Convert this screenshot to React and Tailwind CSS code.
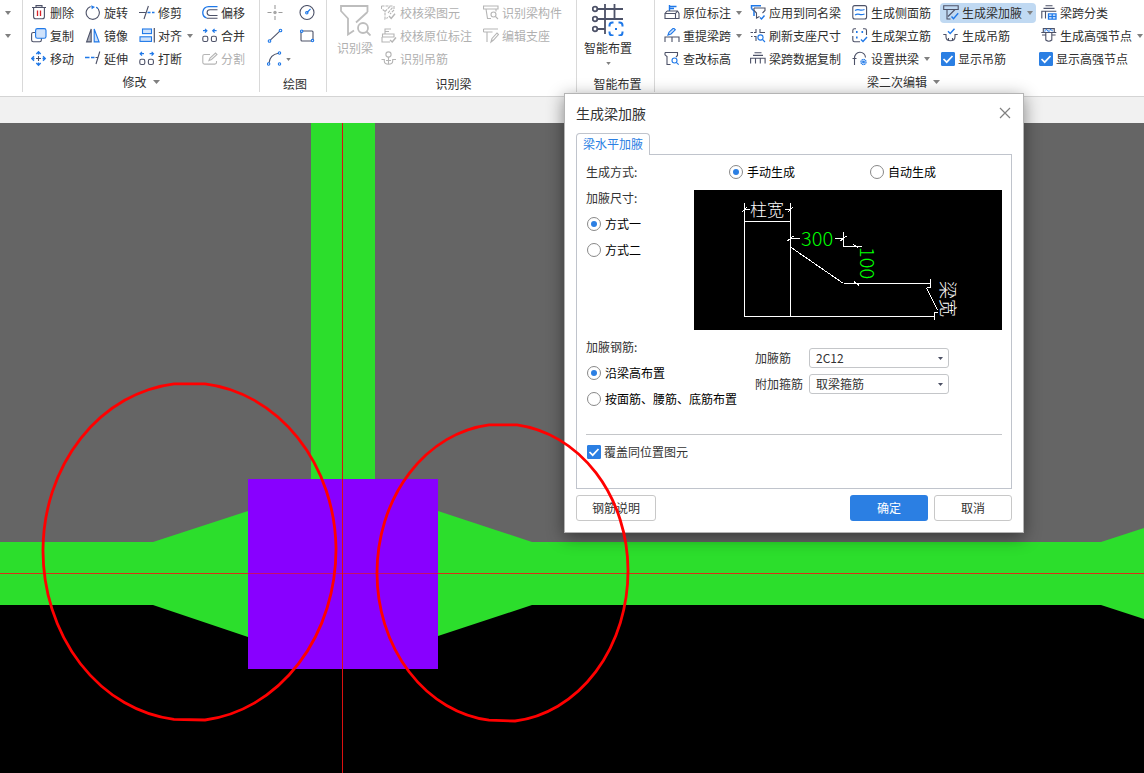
import React, { useState } from "react";

const INK = "#4d5268";
const BLUE = "#1f78e8";
const PALE = "#cfe2fb";
const OFF = "#b5b5b5";

function Icon({ children, stroke = INK }) {
  return (
    <svg viewBox="0 0 16 16" className="size-4 shrink-0" fill="none" stroke={stroke} strokeWidth="1.1" aria-hidden="true">
      {children}
    </svg>
  );
}

function Caret({ small }) {
  return (
    <svg viewBox="0 0 6 4" className={small ? "h-[3px] w-[5px] shrink-0" : "h-1 w-1.5 shrink-0"} fill="#808080" aria-hidden="true">
      <path d="M0 0h6L3 4z" />
    </svg>
  );
}

const icons = {
  trash: (
    <Icon>
      <path d="M1 2.5h14M5 2.2V.6h6v1.6M2.6 2.8v9q0 2 2 2h6.8q2 0 2-2v-9" />
      <path d="M6.5 5.5v5.5M9.5 5.5v5.5" stroke="#d8232a" strokeWidth="1.3" />
    </Icon>
  ),
  rotate: (
    <Icon>
      <path d="M5.6 1.5a6.6 6.6 0 1 0 5.6.6" />
      <path d="M6.2.2 10 2 6.7 4.3z" fill={BLUE} stroke="none" />
      <path d="M11.3 2.2a6.6 6.6 0 0 1 1.7 1.5" stroke={BLUE} />
    </Icon>
  ),
  trim: (
    <Icon>
      <path d="M0 7.5h6.5M9.4 1 5 14" />
      <path d="M8.5 7.5h3M13 7.5h2.5" stroke={BLUE} strokeWidth="1.3" />
    </Icon>
  ),
  offset: (
    <Icon>
      <path d="M15.5 1.6H6.6a5.9 5.9 0 0 0-2 11.4" stroke={BLUE} strokeWidth="1.3" />
      <path d="M15.5 4.7H8a2.9 2.9 0 0 0 0 5.8h7.5M4.6 13.2h10.9" />
    </Icon>
  ),
  copy: (
    <Icon>
      <path d="M4 4.5H2.3q-1.7 0-1.7 1.6v6q0 1.7 1.7 1.7h6.4q1.7 0 1.7-1.7V10" />
      <rect x="4.6" y=".6" width="10.4" height="9.6" rx="1.8" fill={PALE} stroke={BLUE} />
    </Icon>
  ),
  mirror: (
    <Icon>
      <path d="M6.2 1v12.9H1.6z" fill="#aeb2bd" />
      <path d="M9.2 1v12.9h4.9z" fill={PALE} stroke={BLUE} />
    </Icon>
  ),
  align: (
    <Icon>
      <rect x="3.5" y="1" width="9" height="4.6" fill={PALE} stroke={BLUE} />
      <rect x="1" y="8.8" width="11.5" height="4.6" fill={PALE} stroke={BLUE} />
      <path d="M15.3 0v14.5" strokeWidth="1.2" />
    </Icon>
  ),
  merge: (
    <Icon>
      <rect x=".8" y="8.3" width="5" height="5.2" rx="1.6" />
      <rect x="9.4" y="8.3" width="5" height="5.2" rx="1.6" />
      <path d="M1 2.700h3.500M3 .8 4.900 2.700 3 4.600M14.600 2.700h-3.500M12.600.8l-1.900 1.900 1.900 1.900" stroke={BLUE} strokeWidth="1.2" />
    </Icon>
  ),
  breakApart: (
    <Icon>
      <rect x=".8" y="8.3" width="5" height="5.2" rx="1.6" />
      <rect x="9.4" y="8.3" width="5" height="5.2" rx="1.6" />
      <path d="M5 2.700H1.500M3 .8 1.100 2.700 3 4.600M10.600 2.700h3.500M12.600.8l1.900 1.900-1.900 1.900" stroke={BLUE} strokeWidth="1.2" />
    </Icon>
  ),
  move: (
    <Icon stroke={BLUE}>
      <path d="M7.5 1v2.500M7.500 11.500V14M1 7.500h2.500M11.500 7.500H14M5.300 3 7.500.7 9.700 3M5.300 12l2.200 2.300L9.700 12M3 5.300.700 7.500 3 9.700M12 5.300l2.300 2.200L12 9.700" strokeWidth="1.3" />
      <path d="M7.500 5v5M5 7.500h5" stroke={INK} />
    </Icon>
  ),
  extend: (
    <Icon>
      <path d="M0 6.500h4.500M6 6.500h3.500" stroke={BLUE} strokeWidth="1.3" />
      <path d="M10.500 6.500h3M14.800.5 11 13" />
    </Icon>
  ),
  split: (
    <Icon stroke={OFF}>
      <path d="M8 3.500H2.500Q.8 3.500.8 5v6.500q0 1.600 1.700 1.600h10.300q1.700 0 1.700-1.600V10M7 9.500l1-2.500 5.500-5 1.500 1.500-5.500 5z" />
    </Icon>
  ),
  point: (
    <Icon stroke="#9c9c9c">
      <path d="M8 0v4M8 11v4M.5 7.500h4M11.500 7.500h4" />
      <circle cx="8" cy="7.500" r="1.700" fill="#a6a6a6" stroke="none" />
    </Icon>
  ),
  circle: (
    <Icon>
      <circle cx="8" cy="7.500" r="7" />
      <path d="m8 7.500 3.500-3.500" stroke={BLUE} />
      <circle cx="7.800" cy="7.800" r="1.200" stroke={BLUE} />
    </Icon>
  ),
  line: (
    <Icon>
      <path d="M3.300 12.200 12.800 3.200" />
      <circle cx="2.500" cy="13" r="1.300" stroke={BLUE} />
      <circle cx="13.500" cy="2.500" r="1.300" stroke={BLUE} />
    </Icon>
  ),
  rect: (
    <Icon>
      <rect x="2" y="3" width="12" height="10" rx="1" />
      <circle cx="2.700" cy="3.200" r="1.200" stroke={BLUE} fill="white" />
      <circle cx="13.500" cy="12.600" r="1.200" stroke={BLUE} fill="white" />
    </Icon>
  ),
  arc: (
    <Icon>
      <path d="M2 12c.6-5.500 4-9 9.500-9.800" />
      <circle cx="1.600" cy="13" r="1.200" stroke={BLUE} />
      <circle cx="12.500" cy="2" r="1.200" stroke={BLUE} />
      <circle cx="12.500" cy="13" r="1.200" stroke={BLUE} />
    </Icon>
  ),
  checkBeam: (
    <Icon stroke={OFF}>
      <path d="M.5 1h12M.5 1v2.500L4 6.500v7.500l3-1.500M4 6.500 9.500 1M7 8l5-6M13 1v4L9 9" strokeDasharray="3 1" />
      <path d="m8 11 2.200 2.500L14 8.800" strokeWidth="1.400" />
    </Icon>
  ),
  checkMark: (
    <Icon stroke={OFF}>
      <path d="M4 6V.5M4 1h6M4 3.500h4M1.500 6h11.500v3H1.500zM1 9v5h8M13 6v3" />
      <path d="m9 12 2.200 2L15 9.500" strokeWidth="1.400" />
    </Icon>
  ),
  hanger: (
    <Icon stroke={OFF}>
      <circle cx="7.500" cy="3.500" r="2.600" />
      <path d="M7.500 6v7M.5 8.500h2.800v1.500q0 3.200 4.200 3.200t4.200-3.200V8.500H15M5 9.500h5" />
    </Icon>
  ),
  idPart: (
    <Icon stroke={OFF}>
      <path d="M.5 1h14.500v3H.5zM3 4l1.500 9.500H8M13 4v2.500" />
      <circle cx="10.500" cy="9.500" r="2.500" />
      <path d="m12.500 11.500 2.500 2.500" />
    </Icon>
  ),
  editSeat: (
    <Icon stroke={OFF}>
      <path d="M.5 1h14.500M.5 4h9M4 4v10M.5 1v3M8 14l1-3.500L14 5l1.500 1.500-5 5.500z" />
    </Icon>
  ),
  stamp: (
    <Icon>
      <path d="M5.500 6V0M5.500 1.500h7M5.500 3.500h4.500" stroke={BLUE} strokeWidth="1.400" />
      <path d="M3 6h10.500l1.500 2.500v5h-3M1 8.500h10.500v5H1zL3 6M11.500 8.500 13.500 6" />
    </Icon>
  ),
  respan: (
    <Icon>
      <path d="m4 7 1-2.800L9.500 0l1.800 1.800L7 6z" stroke={BLUE} fill={PALE} />
      <path d="M1 14V9h14v5M8 9v5" />
    </Icon>
  ),
  level: (
    <Icon>
      <path d="M1 1.500h12.500v3L12 6M1 1.500v2.300L3 5.500v8h3.500" />
      <circle cx="10.500" cy="9.500" r="2.500" stroke={BLUE} />
      <path d="m12.300 11.400 2.400 2.300" stroke={BLUE} />
    </Icon>
  ),
  apply: (
    <Icon>
      <path d="M1.500 3.500V.8h9.500M1.500 3.500 4 6v5" stroke={BLUE} strokeWidth="1.500" />
      <path d="M4 3h11v2.500L12.500 8M4 3v2.500L6.500 8v5l3-1.500" />
      <path d="m10 12.500 1.500 1.500 3-3.500" stroke={BLUE} strokeWidth="1.400" />
    </Icon>
  ),
  refresh: (
    <Icon>
      <path d="M.5 4.500h2.500M6 1v3.500H4M10 1v3.500h5M4 8.500h2V13M1 8.500h1.500" />
      <circle cx="10.500" cy="9.500" r="2.600" stroke={BLUE} />
      <path d="m12.500 11.500 2.500 2.500" stroke={BLUE} />
    </Icon>
  ),
  spanCopy: (
    <Icon>
      <path d="M4.500 1.800h7M3 4.400h10M.6 12.500V7.200h14.500v5.300M5.500 7.200v5.300M10.300 7.200v5.300" />
    </Icon>
  ),
  sideBar: (
    <Icon>
      <rect x=".8" y=".6" width="13.800" height="13.400" rx="2" />
      <path d="M3 5.500q2-1.200 4.500-.6t5-.4M3 10q2-1.200 4.500-.6t5-.4" stroke={BLUE} strokeWidth="1.300" />
    </Icon>
  ),
  erectBar: (
    <Icon>
      <path d="M4 .8H2.500q-1.700 0-1.700 1.700V5M.8 8v4q0 1.700 1.700 1.700H8M11 .8h1.800q1.700 0 1.700 1.700V7" />
      <path d="M4 4h1.600M9.500 4h1.600M4 9.500h1.600" stroke={BLUE} strokeWidth="1.800" />
      <path d="m9 11.500 2 2 4-4.500" stroke={BLUE} strokeWidth="1.400" />
    </Icon>
  ),
  arch: (
    <Icon>
      <path d="M2.500 14V7a5.500 5.500 0 0 1 11-.5M.5 7.500h4" />
      <circle cx="11.500" cy="11" r="2.600" fill={PALE} stroke={BLUE} strokeDasharray="1.500 .5" />
      <circle cx="11.500" cy="11" r=".8" stroke={BLUE} />
    </Icon>
  ),
  haunch: (
    <Icon>
      <path d="M.7 4.500V.8h14.500v3.700zM4 4.500V14h3.500M5 11.500 12 4.500" />
      <path d="m8.500 11.500 2 2.200 4.700-5.500" stroke={BLUE} strokeWidth="1.400" />
    </Icon>
  ),
  makeHanger: (
    <Icon>
      <path d="M.3 6.500H3v2.200q0 4 4.500 4t4.500-4V6.500h2.700M5.500 10v2M9.500 10v2" />
      <path d="m5 3.200 2.200 2.300L11.500.8" stroke={BLUE} strokeWidth="1.400" />
    </Icon>
  ),
  classify: (
    <Icon>
      <path d="M4.500.8h7M2.500 3.400h11M.8 13.500V6.200h14.500M4.500 6.200v7.300" />
      <path d="M7.500 8.800h7.500v5.400H7.500zM11.200 8.800v5.400M7.500 11.500H15" stroke={BLUE} strokeWidth="1.300" />
    </Icon>
  ),
  node: (
    <Icon>
      <path d="M2.300 4V.6h11V4M.3 4.500h15M4.800 4.500V12q3 2.600 6 0V4.500M1 7h3.800M10.800 7h3.800" />
      <path d="M3.500 3.500 5.500 1.300l2.200 2.200 2.200-2.200 2.200 2.200" stroke={BLUE} strokeDasharray="1.400 .6" />
    </Icon>
  ),
};

function Tool({ icon, label, caret, disabled, active, iconOnly }) {
  return (
    <button
      type="button"
      disabled={disabled}
      aria-label={label}
      aria-pressed={active ? true : undefined}
      className={
        "flex h-5 w-max items-center gap-[3px] whitespace-nowrap rounded-sm text-xs leading-4 " +
        (disabled ? "text-[#b0b0b0] " : "text-[#2f2f2f] ") +
        (active ? "-mx-[3px] bg-[#c0d9f2] px-[3px]" : "")
      }
    >
      {icons[icon]}
      {!iconOnly && <span>{label}</span>}
      {caret && <span className={iconOnly ? "flex" : "ml-0.5 flex"}><Caret small={iconOnly} /></span>}
    </button>
  );
}

function Group({ title, caret, children, className = "" }) {
  return (
    <section className={"flex shrink-0 flex-col border-r border-[#d9d9d9] " + className}>
      <div className="flex-1">{children}</div>
      <h2 className={"flex h-5 items-center justify-center gap-1.5 text-xs leading-4 text-[#2f2f2f] " + (caret ? "" : "pt-[3px] pl-1")}>
        {title}
        {caret && <svg viewBox="0 0 7 4" className="h-1 w-[7px]" fill="#808080" aria-hidden="true"><path d="M0 0h7L3.500 4z" /></svg>}
      </h2>
    </section>
  );
}

function Check({ label, checked, onChange, dark }) {
  return (
    <label className={"flex h-5 w-max items-center gap-[3px] whitespace-nowrap text-xs leading-4 " + (dark ? "-ml-0.5 text-[#2f2f2f]" : "text-[#333]")}>
      <span className="grid size-3.5 place-items-center">
        <input
          type="checkbox"
          checked={checked}
          onChange={(e) => onChange(e.target.checked)}
          className="peer col-start-1 row-start-1 size-3.5 appearance-none rounded-[1px] border border-[#999] bg-white checked:border-[#2b7fe3] checked:bg-[#2b7fe3]"
        />
        <svg viewBox="0 0 14 14" className="pointer-events-none invisible col-start-1 row-start-1 size-3.5 peer-checked:visible" fill="none" stroke="white" strokeWidth="1.700" aria-hidden="true">
          <path d="m2.500 7 3.200 3.200L11.500 4" />
        </svg>
      </span>
      {label}
    </label>
  );
}

function Radio({ name, label, checked, onChange }) {
  return (
    <label className="flex h-[26px] w-max items-center gap-1 whitespace-nowrap text-xs leading-4 text-black">
      <span className="grid size-3.5 place-items-center">
        <input
          type="radio"
          name={name}
          checked={checked}
          onChange={onChange}
          className="peer col-start-1 row-start-1 size-3.5 appearance-none rounded-full border border-[#888] bg-white"
        />
        <span className="pointer-events-none invisible col-start-1 row-start-1 size-1.5 rounded-full bg-[#2b7fe3] peer-checked:visible" />
      </span>
      {label}
    </label>
  );
}

function Choice({ id, label, options }) {
  return (
    <>
      <label htmlFor={id} className="text-xs leading-4 text-[#333]">{label}</label>
      <span className="relative flex items-center">
        <select id={id} className="h-5 w-[140px] appearance-none rounded-[3px] border border-[#c4c6c9] bg-white px-1.5 text-xs leading-4 text-[#333]">
          {options.map((o) => <option key={o}>{o}</option>)}
        </select>
        <svg viewBox="0 0 5 3" className="pointer-events-none absolute right-1.5 h-[3px] w-[5px]" fill="#4a4f63" aria-hidden="true"><path d="M0 0h5L2.500 3z" /></svg>
      </span>
    </>
  );
}

function Ribbon() {
  const [hangers, setHangers] = useState(true);
  const [nodes, setNodes] = useState(true);
  return (
    <header className="flex h-[97px] overflow-hidden border-b border-[#d4d4d4] bg-white pb-1">
      <div className="flex w-[23px] shrink-0 flex-col border-r border-[#d9d9d9] pt-[3px] pl-[5px]">
        <button type="button" aria-label="更多选择" className="flex h-5 items-center"><Caret /></button>
        <button type="button" aria-label="更多工具" className="mt-[3px] flex h-5 items-center"><Caret /></button>
      </div>

      <Group title="修改" caret className="w-[237px]">
        <div className="grid grid-cols-[54px_54px_63px_auto] gap-y-[3px] pt-[3px] pl-2">
          <Tool icon="trash" label="删除" />
          <Tool icon="rotate" label="旋转" />
          <Tool icon="trim" label="修剪" />
          <Tool icon="offset" label="偏移" />
          <Tool icon="copy" label="复制" />
          <Tool icon="mirror" label="镜像" />
          <Tool icon="align" label="对齐" caret />
          <Tool icon="merge" label="合并" />
          <Tool icon="move" label="移动" />
          <Tool icon="extend" label="延伸" />
          <Tool icon="breakApart" label="打断" />
          <Tool icon="split" label="分割" disabled />
        </div>
      </Group>

      <Group title="绘图" className="w-[67px]">
        <div className="grid grid-cols-[32px_auto] gap-y-[3px] pt-[3px] pl-[7px]">
          <Tool icon="point" label="点" iconOnly disabled />
          <Tool icon="circle" label="圆" iconOnly />
          <Tool icon="line" label="直线" iconOnly />
          <Tool icon="rect" label="矩形" iconOnly />
          <Tool icon="arc" label="弧线" iconOnly caret />
        </div>
      </Group>

      <Group title="识别梁" className="w-[250px]">
        <div className="flex pl-2.5">
          <button type="button" disabled className="flex h-max w-9 flex-col items-center gap-1 pt-1 text-xs leading-4 text-[#b0b0b0]">
            <svg viewBox="0 0 32 32" className="size-8" fill="none" stroke="#bdbdbd" strokeWidth="1.800" aria-hidden="true">
              <path d="M28.500 8V2H2v5l7 7.500V30.500l6-4M28.500 8 17 18.500" />
              <circle cx="24" cy="24" r="5" />
              <path d="m27.500 27.500 4 4" />
            </svg>
            <span className="whitespace-nowrap">识别梁</span>
          </button>
          <div className="ml-2 grid grid-cols-[102px_auto] gap-y-[3px] pt-[3px]">
            <Tool icon="checkBeam" label="校核梁图元" disabled />
            <Tool icon="idPart" label="识别梁构件" disabled />
            <Tool icon="checkMark" label="校核原位标注" disabled />
            <Tool icon="editSeat" label="编辑支座" disabled />
            <Tool icon="hanger" label="识别吊筋" disabled />
          </div>
        </div>
      </Group>

      <Group title="智能布置" className="w-[78px]">
        <button type="button" className="ml-[7px] flex flex-col items-center pt-1 text-xs leading-4 text-[#2f2f2f]">
          <svg viewBox="0 0 32 32" className="size-8" fill="none" stroke={INK} strokeWidth="1.800" aria-hidden="true">
            <path d="M5 5h26M5 15h26M5 25h8M13 0v30M22.500 0v14" />
            <g fill="white"><circle cx="3" cy="5" r="2.300" /><circle cx="3" cy="15" r="2.300" /><circle cx="3" cy="25" r="2.300" /></g>
            <rect x="17.500" y="18.500" width="13" height="13" rx="3" stroke="white" strokeWidth="4" fill="white" />
            <path d="M17.500 22.500v-1q0-3 3-3h1M26.500 18.500h1q3 0 3 3v1M30.500 27.500v1q0 3-3 3h-1M21.500 31.500h-1q-3 0-3-3v-1" stroke={BLUE} strokeWidth="2" />
            <path d="M23 25h2" stroke={BLUE} strokeWidth="2" />
          </svg>
          <span className="mt-1 mb-1.5 whitespace-nowrap">智能布置</span>
          <Caret small />
        </button>
      </Group>

      <Group title="梁二次编辑" caret className="w-[498px]">
        <div className="grid grid-cols-[86px_102px_91px_98px_auto] gap-y-[3px] pt-[3px] pl-[9px]">
          <Tool icon="stamp" label="原位标注" caret />
          <Tool icon="apply" label="应用到同名梁" />
          <Tool icon="sideBar" label="生成侧面筋" />
          <Tool icon="haunch" label="生成梁加腋" caret active />
          <Tool icon="classify" label="梁跨分类" />
          <Tool icon="respan" label="重提梁跨" caret />
          <Tool icon="refresh" label="刷新支座尺寸" />
          <Tool icon="erectBar" label="生成架立筋" />
          <Tool icon="makeHanger" label="生成吊筋" />
          <Tool icon="node" label="生成高强节点" caret />
          <Tool icon="level" label="查改标高" />
          <Tool icon="spanCopy" label="梁跨数据复制" />
          <Tool icon="arch" label="设置拱梁" caret />
          <Check label="显示吊筋" checked={hangers} onChange={setHangers} dark />
          <Check label="显示高强节点" checked={nodes} onChange={setNodes} dark />
        </div>
      </Group>
    </header>
  );
}

function Scene() {
  return (
    <svg viewBox="0 0 1144 650" preserveAspectRatio="xMinYMin slice" className="absolute inset-0 size-full" role="img" aria-label="梁柱节点平面">
      <rect width="1144" height="450" fill="#656565" />
      <rect y="450" width="1144" height="200" fill="#000" />
      <g fill="#2cde2c">
        <rect x="311" width="64" height="357" />
        <path d="M0 419h153l95-31v126l-95-32H0z" />
        <path d="M438 388l94 31h569l43-14v91l-43-14H532l-94 31z" />
      </g>
      <rect x="248" y="356" width="190" height="190" fill="#8800ff" />
      <rect y="450" width="1144" height="1" fill="#d8301a" />
      <rect x="248" y="450" width="190" height="1" fill="#c4106a" />
      <rect x="342" width="1" height="650" fill="#dc1010" />
    </svg>
  );
}

function Markup() {
  return (
    <svg viewBox="0 0 1144 650" preserveAspectRatio="xMinYMin slice" className="pointer-events-none absolute inset-0 size-full" fill="none" stroke="#ff0000" strokeWidth="2.800" aria-hidden="true">
      <path d="M174 260.800h31A147 168 0 0 1 336 425A147 172 0 0 1 205 597l-31-.6A147 170 0 0 1 43 427A147 168 0 0 1 174 260.800z" />
      <path d="M489 301.800h28A126 147 0 0 1 628 447A126 151 0 0 1 515 598l-26-.8A126 148 0 0 1 377 450A126 149 0 0 1 489 301.800z" />
    </svg>
  );
}

function HaunchDiagram() {
  return (
    <svg viewBox="0 0 308 140" className="mt-[5px] h-[140px] w-[308px] bg-black" fill="none" stroke="white" role="img" aria-label="加腋尺寸示意图">
      <g shapeRendering="crispEdges">
        <path d="M50.500 13v113.500M96.500 13v113.500M50.500 31.500h46M50.500 126.500h190M149.500 93.500h87" />
        <path d="M50.500 19.500h5M91 19.500h5M96.500 48.500h9.500M141 48.500h8.500M149.500 42v14.500h18M236.500 89v8.500h-4M243.500 122.500h-3v7" />
        <path d="M96.500 57l53 36.500M232.500 98l11 22M48 22l5-5M94 22l5-5M93.500 51l6-5M146.500 51l6-5M159 54.500l5 3M160 91.500l5 4" />
      </g>
      <g stroke="none">
        <text x="56" y="26" fontSize="17" fill="white" className="font-light">柱宽</text>
        <text x="107" y="56" fontSize="20" fill="#00ff00" className="font-light">300</text>
        <text transform="translate(166 57) rotate(90)" fontSize="20" fill="#00ff00" className="font-light">100</text>
        <text transform="translate(247 91) rotate(90)" fontSize="18" fill="white" className="font-light">梁宽</text>
      </g>
    </svg>
  );
}

function HaunchDialog() {
  const [mode, setMode] = useState("manual");
  const [size, setSize] = useState("one");
  const [layout, setLayout] = useState("height");
  const [cover, setCover] = useState(true);
  return (
    <div role="dialog" aria-labelledby="dialog-title" className="absolute -top-[30px] left-[564px] w-[460px] border border-[#b4b4b4] bg-white px-[11px] pb-[11px] shadow-[0_4px_16px_rgba(0,0,0,0.45)]">
      <div className="flex h-[39px] items-center justify-between pr-px pb-0.5">
        <h1 id="dialog-title" className="text-sm leading-5 text-[#333]">生成梁加腋</h1>
        <button type="button" aria-label="关闭" className="flex size-3 items-center justify-center">
          <svg viewBox="0 0 12 12" className="size-3" fill="none" stroke="#808080" strokeWidth="1.200" aria-hidden="true"><path d="m1 1 10 10M11 1 1 11" /></svg>
        </button>
      </div>
      <div role="tablist" className="flex">
        <button type="button" role="tab" aria-selected="true" className="relative -mb-px h-[22px] rounded-t border border-b-0 border-[#c0c4cc] bg-white px-1.5 pb-0.5 text-xs leading-4 text-[#2b7fe3]">梁水平加腋</button>
      </div>
      <div role="tabpanel" className="border border-[#c0c4cc] pt-1 pr-[9px] pb-[26px] pl-[9px] text-xs leading-4 text-[#333]">
        <div role="radiogroup" aria-label="生成方式" className="grid h-[26px] grid-cols-[143px_141px_auto] items-center">
          <span>生成方式:</span>
          <Radio name="mode" label="手动生成" checked={mode === "manual"} onChange={() => setMode("manual")} />
          <Radio name="mode" label="自动生成" checked={mode === "auto"} onChange={() => setMode("auto")} />
        </div>
        <div className="flex justify-between">
          <div role="radiogroup" aria-label="加腋尺寸">
            <div className="flex h-[26px] items-center">加腋尺寸:</div>
            <div className="pl-px">
              <Radio name="size" label="方式一" checked={size === "one"} onChange={() => setSize("one")} />
              <Radio name="size" label="方式二" checked={size === "two"} onChange={() => setSize("two")} />
            </div>
          </div>
          <HaunchDiagram />
        </div>
        <div className="mt-1 flex">
          <div role="radiogroup" aria-label="加腋钢筋" className="w-[169px]">
            <div className="flex h-[26px] items-center">加腋钢筋:</div>
            <div className="pl-px">
              <Radio name="layout" label="沿梁高布置" checked={layout === "height"} onChange={() => setLayout("height")} />
              <Radio name="layout" label="按面筋、腰筋、底筋布置" checked={layout === "faces"} onChange={() => setLayout("faces")} />
            </div>
          </div>
          <div className="grid h-max grid-cols-[54px_auto] items-center gap-y-1.5 pt-3.5">
            <Choice id="haunch-bar" label="加腋筋" options={["2C12", "2C14", "2C16"]} />
            <Choice id="stirrup" label="附加箍筋" options={["取梁箍筋", "自定义"]} />
          </div>
        </div>
        <hr className="mt-[22px] mb-[7px] border-[#c4c6c9]" />
        <div className="pl-px">
          <Check label="覆盖同位置图元" checked={cover} onChange={setCover} />
        </div>
      </div>
      <div className="mt-1.5 flex gap-1.5 text-xs leading-4 text-[#333]">
        <button type="button" className="mr-auto h-[26px] w-20 rounded-[3px] border border-[#c8c8c8] bg-white">钢筋说明</button>
        <button type="button" className="h-[26px] w-[78px] rounded-[3px] bg-[#2b7fe3] text-white">确定</button>
        <button type="button" className="h-[26px] w-[78px] rounded-[3px] border border-[#c8c8c8] bg-white">取消</button>
      </div>
    </div>
  );
}

export default function App() {
  return (
    <div className="flex h-screen flex-col overflow-hidden bg-[#f1f1f1] font-['Noto_Sans_CJK_SC','Noto_Sans',sans-serif]">
      <Ribbon />
      <div className="h-[26px] shrink-0" />
      <main className="relative min-h-0 flex-1">
        <Scene />
        <HaunchDialog />
        <Markup />
      </main>
    </div>
  );
}
